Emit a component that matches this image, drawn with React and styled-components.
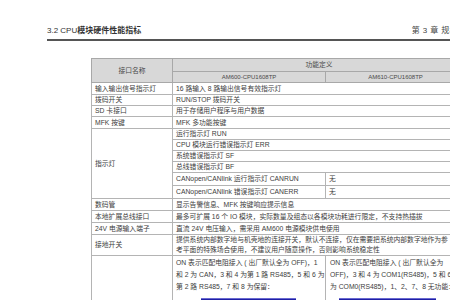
import React from "react";
import styled, {createGlobalStyle} from "styled-components";

const GlobalStyle = createGlobalStyle`
  html, body {
    margin: 0;
    padding: 0;
    background: #fff;
    overflow: hidden;
  }
  body {
    font-family: "Liberation Sans", "Noto Sans CJK SC", sans-serif;
    color: #3c3c3c;
  }
`

const Page = styled.div`
  width: 450px;
  height: 300px;
  overflow: hidden;
  padding: 26px 0 0 47px;
  box-sizing: border-box;
`
const HeaderBar = styled.div`
  width: 411px;
  display: flex;
  justify-content: space-between;
  align-items: flex-end;
  border-bottom: 2px solid #555;
  padding-bottom: 3px;
  font-size: 8px;
  line-height: 10px;
`
const Title = styled.div`
  color: #333;
`
const TitleStrong = styled.span`
  font-weight: 700;
`
const Chapter = styled.div`
  letter-spacing: 0.4px;
  color: #444;
  white-space: nowrap;
`
const TableWrap = styled.div`
  margin: 17px 0 0 44px;
`
const Table = styled.table`
  border-collapse: collapse;
  table-layout: fixed;
  width: 374px;
  font-size: 6.8px;
  line-height: 10px;
`
const HeadCell = styled.th`
  background: #d8d8d8;
  font-weight: 400;
  color: #4a4a4a;
  border: 1px solid #a8a8a8;
  padding: 0;
  text-align: center;
  font-size: ${p => p.$small ? "6px" : "6.8px"};
  line-height: 10px;
`
const Row = styled.tr`
  height: ${p => p.$h}px;
`
const Cell = styled.td`
  border: 1px solid #b4b4b4;
  padding: ${p => p.$pad || "0 0 0 3px"};
  vertical-align: ${p => p.$top ? "top" : "middle"};
  white-space: nowrap;
  overflow: hidden;
  line-height: ${p => p.$lh || 10}px;
`
const Switch = styled.div`
  margin: 5px 0 0 ${p => p.$left}px;
  width: ${p => p.$w}px;
  height: 20px;
  background: #1f1fa6;
  border-top: 1px solid #6a6ad0;
  color: #fff;
  font-size: 5px;
  line-height: 6px;
  font-weight: 700;
  padding-left: 2px;
  box-sizing: border-box;
`

const rows = [
    {name: "输入输出信号指示灯", text: "16 路输入 8 路输出信号有效指示灯", h: 12},
    {name: "拨码开关", text: "RUN/STOP 拨码开关", h: 11},
    {name: "SD 卡接口", text: "用于存储用户程序与用户数据", h: 11},
    {name: "MFK 按键", text: "MFK 多功能按键", h: 12},
]

const lamps = [
    {text: "运行指示灯 RUN", h: 11},
    {text: "CPU 模块运行错误指示灯 ERR", h: 11},
    {text: "系统错误指示灯 SF", h: 11},
    {text: "总线错误指示灯 BF", h: 11},
    {text: "CANopen/CANlink 运行指示灯 CANRUN", other: "无", h: 13},
    {text: "CANopen/CANlink 错误指示灯 CANERR", other: "无", h: 13},
]

const tail = [
    {name: "数码管", text: "显示告警信息、MFK 按键响应提示信息", h: 12},
    {name: "本地扩展总线接口", text: "最多可扩展 16 个 IO 模块，实际数量及组态以各模块功耗进行限定，不支持热插拔", h: 12},
    {name: "24V 电源输入端子", text: "直流 24V 电压输入，需采用 AM600 电源模块供电使用", h: 12},
]

const App = () => {
    return (
        <Page>
            <GlobalStyle/>
            <HeaderBar>
                <Title>3.2 CPU<TitleStrong>模块硬件性能指标</TitleStrong></Title>
                <Chapter>第 3 章 规格</Chapter>
            </HeaderBar>
            <TableWrap>
                <Table>
                    <colgroup>
                        <col style={{width: 81}}/>
                        <col style={{width: 153}}/>
                        <col style={{width: 140}}/>
                    </colgroup>
                    <thead>
                    <Row $h={13}>
                        <HeadCell rowSpan={2}>接口名称</HeadCell>
                        <HeadCell colSpan={2}>功能定义</HeadCell>
                    </Row>
                    <Row $h={11}>
                        <HeadCell $small>AM600-CPU1608TP</HeadCell>
                        <HeadCell $small>AM610-CPU1608TP</HeadCell>
                    </Row>
                    </thead>
                    <tbody>
                    {rows.map((r, i) => (
                        <Row $h={r.h} key={i}>
                            <Cell>{r.name}</Cell>
                            <Cell colSpan={2}>{r.text}</Cell>
                        </Row>
                    ))}
                    {lamps.map((l, i) => (
                        <Row $h={l.h} key={"l" + i}>
                            {i === 0 ? <Cell rowSpan={lamps.length}>指示灯</Cell> : null}
                            {l.other ? (
                                <>
                                    <Cell>{l.text}</Cell>
                                    <Cell>{l.other}</Cell>
                                </>
                            ) : <Cell colSpan={2}>{l.text}</Cell>}
                        </Row>
                    ))}
                    {tail.map((r, i) => (
                        <Row $h={r.h} key={"t" + i}>
                            <Cell>{r.name}</Cell>
                            <Cell colSpan={2}>{r.text}</Cell>
                        </Row>
                    ))}
                    <Row $h={21}>
                        <Cell>接地开关</Cell>
                        <Cell colSpan={2} $lh={10}>
                            提供系统内部数字地与机壳地的连接开关，默认不连接，仅在需要把系统内部数字地作为参<br/>
                            考平面的特殊场合使用，不建议用户随意操作，否则影响系统稳定性
                        </Cell>
                    </Row>
                    <Row $h={60}>
                        <Cell/>
                        <Cell $top $lh={12} $pad="1px 0 0 3px">
                            ON 表示匹配电阻接入 ( 出厂默认全为 OFF)，1<br/>
                            和 2 为 CAN，3 和 4 为第 1 路 RS485，5 和 6 为<br/>
                            第 2 路 RS485，7 和 8 为保留：
                            <Switch $left={25} $w={95}>ON</Switch>
                        </Cell>
                        <Cell $top $lh={12} $pad="1px 0 0 4px">
                            ON 表示匹配电阻接入 ( 出厂默认全为<br/>
                            OFF)，3 和 4 为 COM1(RS485)，5 和 6<br/>
                            为 COM0(RS485)，1、2、7、8 无功能：
                            <Switch $left={9} $w={97}>ON</Switch>
                        </Cell>
                    </Row>
                    </tbody>
                </Table>
            </TableWrap>
        </Page>
    )
}

export default App;
